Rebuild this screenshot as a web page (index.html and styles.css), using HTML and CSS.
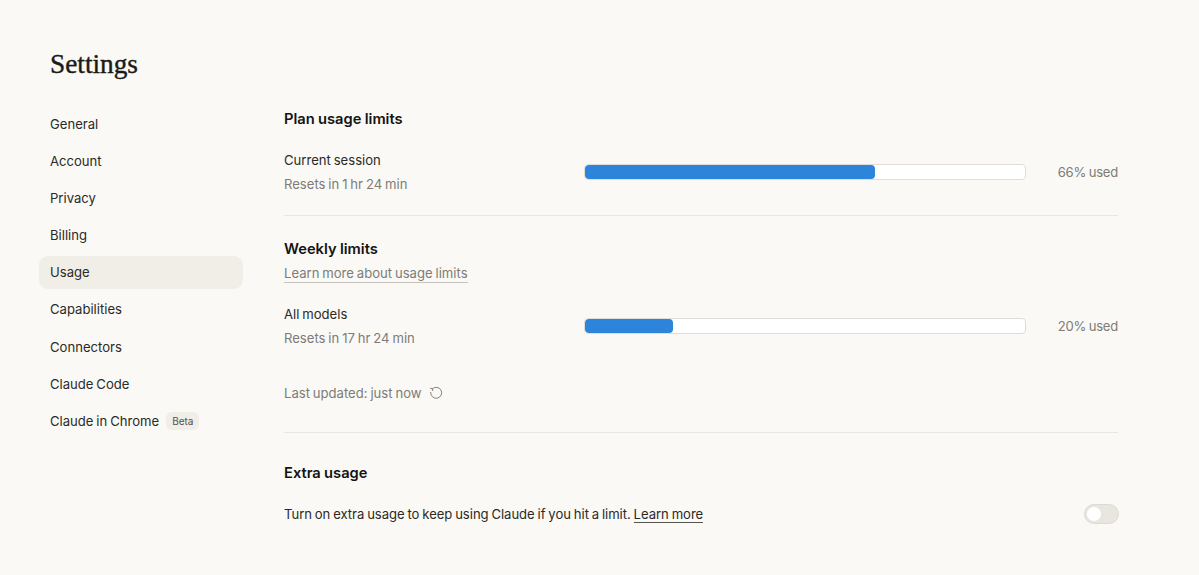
FILE: index.html
```html
<!DOCTYPE html>
<html lang="en">
<head>
<meta charset="utf-8">
<title>Settings</title>
<link rel="stylesheet" href="styles.css">
</head>
<body>
<div class="page">
  <h1 class="title">Settings</h1>
  <div class="layout">
    <nav class="nav">
      <a class="nav-item">General</a>
      <a class="nav-item">Account</a>
      <a class="nav-item">Privacy</a>
      <a class="nav-item">Billing</a>
      <a class="nav-item active">Usage</a>
      <a class="nav-item">Capabilities</a>
      <a class="nav-item">Connectors</a>
      <a class="nav-item">Claude Code</a>
      <a class="nav-item">Claude in Chrome <span class="badge">Beta</span></a>
    </nav>
    <main class="main">
      <section class="plan">
        <h2 class="heading">Plan usage limits</h2>
        <div class="usage-row first">
          <div class="usage-label">
            <div class="label">Current session</div>
            <div class="sub">Resets in 1 hr 24 min</div>
          </div>
          <div class="bar"><div class="fill" style="width:66%"></div></div>
          <div class="pct">66% used</div>
        </div>
      </section>
      <section class="weekly">
        <h2 class="heading">Weekly limits</h2>
        <a class="learn-sub">Learn more about usage limits</a>
        <div class="usage-row second">
          <div class="usage-label">
            <div class="label">All models</div>
            <div class="sub">Resets in 17 hr 24 min</div>
          </div>
          <div class="bar"><div class="fill" style="width:20%"></div></div>
          <div class="pct">20% used</div>
        </div>
        <div class="updated">
          <span>Last updated: just now</span>
          <svg class="refresh" viewBox="0 0 16 16" width="14" height="14" fill="none" stroke="currentColor" stroke-width="1.1" stroke-linecap="round" stroke-linejoin="round"><path d="M3.8 3.2A6.3 6.3 0 1 1 1.9 7.2"/><path d="M1.8 2.6l2 .6.5 2.1"/></svg>
        </div>
      </section>
      <section class="extra">
        <h2 class="heading">Extra usage</h2>
        <div class="extra-row">
          <p class="extra-text">Turn on extra usage to keep using Claude if you hit a limit. <a class="learn">Learn more</a></p>
          <div class="toggle"><div class="knob"></div></div>
        </div>
      </section>
    </main>
  </div>
</div>
</body>
</html>
```
FILE: styles.css
```css
* { box-sizing: border-box; }
html, body { margin: 0; height: 100%; }
body {
  background: #faf9f5;
  color: #1f1e1c;
  font-family: Inter, "Liberation Sans", sans-serif;
  font-size: 13.1px;
  word-spacing: -0.8px;
  line-height: 20px;
  overflow: hidden;
}
.page { padding: 48px 81px 0 39px; }
.title {
  margin: 0 0 27px 11px;
  font-family: "Liberation Serif", serif;
  font-size: 27.3px;
  line-height: 32px;
  font-weight: 400;
  -webkit-text-stroke: 0.4px #1a1a18;
  word-spacing: 0;
  color: #1a1a18;
}
.layout { display: flex; gap: 41px; }
.nav { width: 204px; flex: none; display: flex; flex-direction: column; gap: 4.12px; padding-top: 0.4px; }
.nav-item {
  display: flex;
  align-items: center;
  height: 33px;
  padding: 0 11px;
  border-radius: 9px;
  color: #2b2a27;
}
.nav-item.active { background: #f0eee6; }
.badge {
  margin-left: 7px;
  padding: 0 6px;
  height: 18px;
  border-radius: 6px;
  background: #f0eee6;
  font-size: 10px;
  line-height: 18px;
  color: #55534e;
}
.main { flex: 1; min-width: 0; padding-top: 2px; }
.heading {
  margin: 0;
  font-size: 14.7px;
  line-height: 20px;
  font-weight: 600;
  word-spacing: -0.4px;
  color: #141413;
}
.plan { padding-bottom: 21px; border-bottom: 1px solid #e8e6df; }
.usage-row { display: flex; align-items: center; }
.usage-row.first { margin-top: 21px; }
.usage-row.second { margin-top: 21px; }
.usage-label { width: 301px; flex: none; display: flex; flex-direction: column; gap: 4px; }
.label { color: #2b2a27; }
.sub { color: #7d7c77; }
.bar {
  width: 442px;
  flex: none;
  height: 16px;
  margin-left: -1px;
  background: #fff;
  border: 1px solid #dfddd6;
  border-radius: 4px;
  overflow: hidden;
}
.fill { height: 100%; background: #2c84db; border-radius: 4px; }
.pct { flex: 1; text-align: right; color: #7d7c77; letter-spacing: -0.25px; }
.weekly { padding-top: 23px; padding-bottom: 29px; border-bottom: 1px solid #e8e6df; }
.learn-sub {
  display: inline-block;
  margin-top: 6px;
  color: #7d7c77;
  line-height: 17px;
  border-bottom: 1px solid #c4c2bb;
}
.updated { display: flex; align-items: center; gap: 8px; margin-top: 35px; color: #7d7c77; }
.refresh { color: #7d7c77; }
.extra { padding-top: 30px; }
.extra-row { display: flex; align-items: center; justify-content: space-between; margin-top: 21px; }
.extra-text { margin: 0; color: #2b2a27; letter-spacing: -0.035px; }
.learn { border-bottom: 1px solid #55534e; }
.toggle {
  width: 35px;
  height: 20px;
  margin-right: -1px;
  padding: 2px;
  border-radius: 10px;
  background: #e8e6de;
  border: 1px solid #dcdad2;
}
.knob { width: 14px; height: 14px; border-radius: 50%; background: #fff; }
```
